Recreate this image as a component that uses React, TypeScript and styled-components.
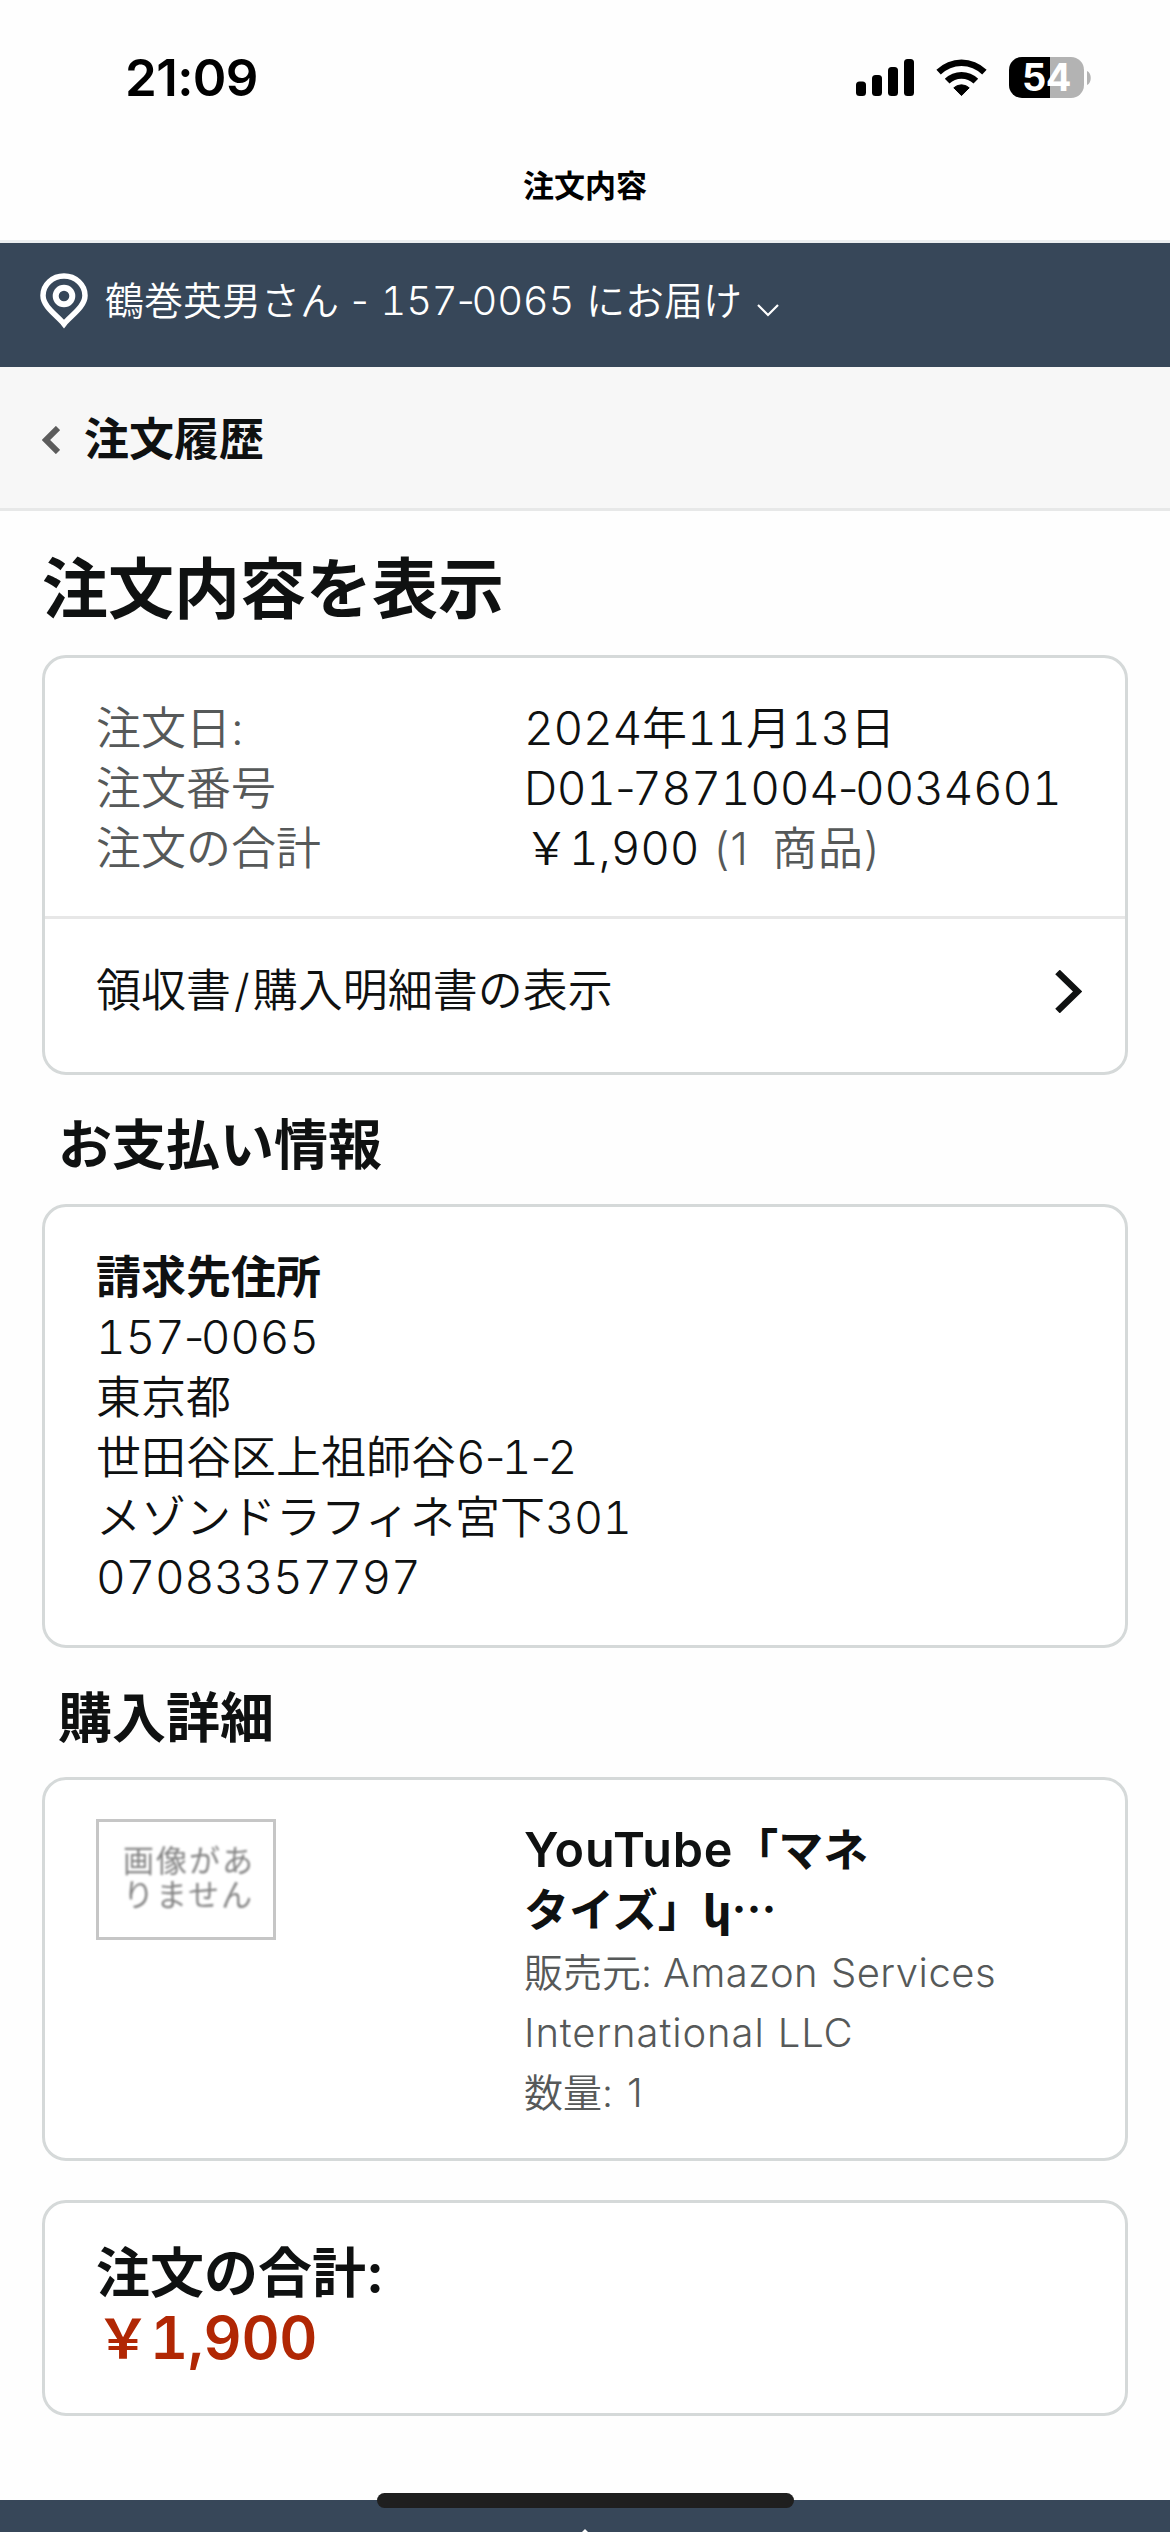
import React from "react";
import styled, { createGlobalStyle } from "styled-components";

const sans = `Inter, "Noto Sans CJK JP", "Liberation Sans", sans-serif`;

const GlobalStyle = createGlobalStyle`
  * { box-sizing: border-box; }
  body { margin: 0; background: #fefefe; font-family: ${sans}; color: #0f1111; }
  h1, h2, p, dl, dt, dd { margin: 0; }
`;

const Screen = styled.div`
  width: 1170px;
  height: 2532px;
  overflow: hidden;
  position: relative;
  display: flex;
  flex-direction: column;
  background: #fefefe;
  font-size: 45px;
  line-height: 60px;
  font-weight: 350;
  white-space: nowrap;
`;

const StatusBar = styled.div`
  height: 155px;
  padding: 0 79px 0 125px;
  display: flex;
  align-items: center;
  justify-content: space-between;
  color: #000;
`;

const Clock = styled.span`
  font-size: 51px;
  font-weight: 600;
  letter-spacing: -0.6px;
`;

const StatusIcons = styled.div`
  display: flex;
  align-items: center;
  gap: 22px;
`;

const Battery = styled.div`
  display: flex;
  align-items: center;
  gap: 3px;
`;

const BatteryBody = styled.div`
  width: 75px;
  height: 41px;
  border-radius: 13px;
  background: linear-gradient(to right, #000 41px, #b3b3b3 41px);
  display: flex;
  align-items: center;
  justify-content: center;
  color: #fff;
  font-size: 38px;
  font-weight: 700;
  line-height: 41px;
  letter-spacing: -0.5px;
`;

const TitleBar = styled.div`
  height: 88px;
  border-bottom: 3px solid #ebeef0;
  text-align: center;
  font-size: 31px;
  line-height: 61px;
  font-weight: 700;
  color: #000;
`;

const DeliveryBar = styled.div`
  height: 124px;
  padding: 0 40px 8px;
  display: flex;
  align-items: center;
  background: #374759;
  color: #fff;
  font-size: 39px;
`;

const DeliveryText = styled.span`
  margin: 0 15px 0 17px;
  word-spacing: 1px;
`;

const DownChevron = styled.svg`
  margin-top: 19px;
`;

const BackBar = styled.div`
  height: 144px;
  padding: 5px 42px 0;
  display: flex;
  align-items: center;
  gap: 24px;
  background: #f7f7f7;
  border-bottom: 3px solid #e7e8e8;
  font-weight: 700;
`;

const Content = styled.main`
  flex: 1;
  display: flex;
  flex-direction: column;
  padding: 0 42px;
`;

const PageTitle = styled.h1`
  height: 144px;
  padding-top: 33px;
  font-size: 66px;
  line-height: 90px;
  font-weight: 700;
`;

const SectionTitle = styled.h2`
  height: 129px;
  padding: 35px 0 0 16px;
  font-size: 54px;
  line-height: 72px;
  font-weight: 700;
`;

const Card = styled.section<{ $height: number; $gap?: number }>`
  height: ${(p) => p.$height}px;
  margin-top: ${(p) => p.$gap ?? 0}px;
  border: 3px solid #d5d9d9;
  border-radius: 24px;
  background: #fff;
`;

const Padded = styled.div`
  padding: 41px 51px 0;
`;

const Summary = styled.dl`
  height: 261px;
  padding: 41px 0 0 51px;
  display: grid;
  grid-template-columns: 428px 1fr;
  grid-auto-rows: 60px;
  border-bottom: 3px solid #e7e7e7;
  dt { color: #565959; }
`;

const Muted = styled.span`
  color: #565959;
  margin-left: 2px;
  word-spacing: 10px;
  letter-spacing: 0.8px;
`;

const LinkRow = styled.div`
  height: 144px;
  padding: 0 43px 0 51px;
  display: flex;
  align-items: center;
  justify-content: space-between;
`;

const Slash = styled.span`
  padding: 0 3px;
`;

const Strong = styled.p<{ $size?: number }>`
  font-weight: 700;
  font-size: ${(p) => p.$size ?? 45}px;
`;

const NumberText = styled.span<{ $size: number }>`
  font-size: ${(p) => p.$size}px;
  letter-spacing: -0.25px;
  font-variant-numeric: tabular-nums;
  line-height: 1;
`;

const Hyphen = styled.span`
  font-variant-numeric: normal;
  letter-spacing: -0.08em;
  margin-left: -0.02em;
`;

const Kana = styled.span`
  font-family: "Noto Sans CJK JP", sans-serif;
  line-height: 1;
`;

const Armenian = styled.span`
  font-family: "DejaVu Sans", sans-serif;
  line-height: 1;
`;

const Brand = styled.span`
  font-size: 48.5px;
  letter-spacing: 0.8px;
  line-height: 1;
`;

const Item = styled.div`
  display: grid;
  grid-template-columns: 428px 1fr;
  padding: 40px 0 0 51px;
`;

const ItemInfo = styled.div`
  padding-top: 1px;
`;

const NoImage = styled.div`
  width: 180px;
  height: 121px;
  margin-top: -1px;
  padding: 22px 0 0 24px;
  border: 3px solid #c6c6c6;
  color: #858585;
  font-size: 31px;
  line-height: 34px;
  letter-spacing: 2px;
  font-weight: 400;
  filter: none;
  p { filter: blur(1px); }
`;

const ItemTitle = styled.p`
  font-weight: 600;
`;

const ItemMeta = styled.div`
  padding-top: 2px;
  font-size: 39px;
  color: #565959;
`;

const MetaLatin = styled.span<{ $track?: number }>`
  font-size: 40px;
  letter-spacing: ${(p) => p.$track ?? 0.5}px;
  word-spacing: 1px;
  line-height: 1;
`;

const Quantity = styled.p`
  word-spacing: 3px;
`;

const Total = styled.div`
  padding: 38px 51px 0;
  line-height: 66px;
`;

const Price = styled.p`
  color: #b12704;
  font-size: 54px;
  font-weight: 600;
`;

const Footer = styled.footer`
  height: 32px;
  display: flex;
  align-items: flex-end;
  justify-content: center;
  background: #374759;
`;

const HomeIndicator = styled.div`
  position: absolute;
  left: 377px;
  bottom: 24px;
  width: 417px;
  height: 15px;
  border-radius: 8px;
  background: #1f1f1f;
`;

const Num = ({ children, size = 46 }: { children: string; size?: number }) => (
  <NumberText $size={size}>
    {children.split("-").map((part, i) => (
      <React.Fragment key={i}>
        {i > 0 && <Hyphen>-</Hyphen>}
        {part}
      </React.Fragment>
    ))}
  </NumberText>
);

const Signal = () => (
  <svg width="58" height="37" viewBox="0 0 58 37">
    <rect x="0" y="22.5" width="10" height="14.5" rx="3.5" />
    <rect x="16" y="16" width="10" height="21" rx="3.5" />
    <rect x="32" y="8" width="10" height="29" rx="3.5" />
    <rect x="48" y="0" width="10" height="37" rx="3.5" />
  </svg>
);

const Wifi = () => (
  <svg width="51" height="38" viewBox="0 0 51 38">
    <path d="M0.4 10.8 A36 36 0 0 1 50.6 10.8 L46.2 15.4 A29.6 29.6 0 0 0 4.8 15.4 Z" />
    <path d="M8.8 19.8 A24 24 0 0 1 42.2 19.8 L37.5 24.6 A17.3 17.3 0 0 0 13.5 24.6 Z" />
    <path d="M17.8 28.8 A11.5 11.5 0 0 1 33.2 28.8 L25.5 36.6 Z" strokeLinejoin="round" stroke="#000" strokeWidth="1" />
  </svg>
);

const Pin = () => (
  <svg width="48" height="56" viewBox="0 0 48 56" fill="none" stroke="#fff">
    <path d="M24 51 C18 43 3 34 3 22.5 A21 19.5 0 0 1 45 22.5 C45 34 30 43 24 51 Z" strokeWidth="5.5" />
    <circle cx="24" cy="23" r="8.3" strokeWidth="6" />
  </svg>
);

export default function App() {
  return (
    <>
      <GlobalStyle />
      <Screen>
        <StatusBar>
          <Clock>21:09</Clock>
          <StatusIcons>
            <Signal />
            <Wifi />
            <Battery>
              <BatteryBody>54</BatteryBody>
              <svg width="4" height="14" viewBox="0 0 4 14">
                <path d="M0 0 C5 2 5 12 0 14 Z" fill="#b3b3b3" />
              </svg>
            </Battery>
          </StatusIcons>
        </StatusBar>
        <TitleBar>注文内容</TitleBar>
        <DeliveryBar>
          <Pin />
          <DeliveryText>
            鶴巻英男さん - <Num size={40}>157-0065</Num> にお届け
          </DeliveryText>
          <DownChevron width="22" height="13" viewBox="0 0 22 13" fill="none" stroke="#fff" strokeWidth="2.2">
            <path d="M1 1 L11 11 L21 1" />
          </DownChevron>
        </DeliveryBar>
        <BackBar>
          <svg width="18" height="28" viewBox="0 0 18 28" fill="none" stroke="#5c5c5c" strokeWidth="6">
            <path d="M16 2 L4 14 L16 26" />
          </svg>
          注文履歴
        </BackBar>
        <Content>
          <PageTitle>注文内容を表示</PageTitle>
          <Card $height={420}>
            <Summary>
              <dt>注文日:</dt>
              <dd>
                <Num>2024</Num>年<Num>11</Num>月<Num>13</Num>日
              </dd>
              <dt>注文番号</dt>
              <dd>
                <Num>D01-7871004-0034601</Num>
              </dd>
              <dt>注文の合計</dt>
              <dd>
                ￥<Num>1,900</Num> <Muted>(1 商品)</Muted>
              </dd>
            </Summary>
            <LinkRow>
              <span>領収書<Slash>/</Slash>購入明細書の表示</span>
              <svg width="27" height="43" viewBox="0 0 27 43" fill="none" stroke="#0f1111" strokeWidth="6.5">
                <path d="M2.5 2 L22.5 21.5 L2.5 41" />
              </svg>
            </LinkRow>
          </Card>
          <SectionTitle>お支払い情報</SectionTitle>
          <Card $height={444}>
            <Padded>
              <Strong>請求先住所</Strong>
              <p><Num>157-0065</Num></p>
              <p>東京都</p>
              <p>世田谷区上祖師谷<Num>6-1-2</Num></p>
              <p>メゾンドラフィネ宮下<Num size={45}>301</Num></p>
              <p><Num>07083357797</Num></p>
            </Padded>
          </Card>
          <SectionTitle>購入詳細</SectionTitle>
          <Card $height={384}>
            <Item>
              <NoImage>
                <p>画像があ<br />りません</p>
              </NoImage>
              <ItemInfo>
                <ItemTitle><Brand>YouTube</Brand>「マネ</ItemTitle>
                <ItemTitle>
                  タイズ」<Armenian>կ</Armenian><Kana>…</Kana>
                </ItemTitle>
                <ItemMeta>
                  <p>販売元: <MetaLatin>Amazon Services</MetaLatin></p>
                  <p><MetaLatin $track={0.9}>International LLC</MetaLatin></p>
                  <Quantity>数量: <MetaLatin>1</MetaLatin></Quantity>
                </ItemMeta>
              </ItemInfo>
            </Item>
          </Card>
          <Card $height={216} $gap={39}>
            <Total>
              <Strong $size={54}>注文の合計:</Strong>
              <Price>￥<Num size={59}>1,900</Num></Price>
            </Total>
          </Card>
        </Content>
        <Footer>
          <svg width="6" height="3" viewBox="0 0 6 3">
            <path d="M3 0 L6 3 H0 Z" fill="#fff" />
          </svg>
        </Footer>
        <HomeIndicator />
      </Screen>
    </>
  );
}
